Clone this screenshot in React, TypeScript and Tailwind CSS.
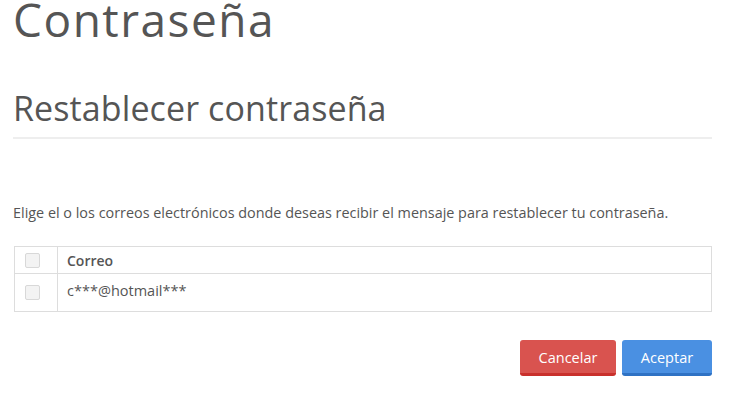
import React from 'react';

export default function App() {
  const rows = [{ id: 1, email: 'c***@hotmail***' }];

  return (
    <div className="w-[734px] h-[409px] bg-white overflow-hidden text-[#555555]" style={{ fontFamily: '"Open Sans", sans-serif' }}>
      <div className="ml-[13px] w-[699px]">
        <h1 className="text-[46px] leading-[38px] tracking-[1.5px] font-normal text-[#555555]">Contraseña</h1>

        <h2 className="mt-[50px] text-[34px] leading-[40px] tracking-[0.1px] font-normal text-[#555555]">Restablecer contraseña</h2>
        <div className="mt-[9px] h-[2px] bg-[#eeeeee]" />

        <p className="mt-[64px] text-[14.4px] leading-[20px]">
          Elige el o los correos electrónicos donde deseas recibir el mensaje para restablecer tu contraseña.
        </p>

        {/* tabla de correos */}
        <table className="mt-[23px] ml-[1px] w-[698px] border-collapse border border-[#dddddd] text-[14px]">
          <thead>
            <tr className="h-[27px]">
              <th className="w-[43px] border border-[#dddddd] p-0">
                <span className="block ml-[10px] w-[15px] h-[15px] border border-[#d8d8d8] bg-[#f3f3f3] rounded-[2px]" />
              </th>
              <th className="border border-[#dddddd] text-left font-semibold pl-[9px]">Correo</th>
            </tr>
          </thead>
          <tbody>
            {rows.map((r) => (
              <tr key={r.id} className="h-[38px]">
                <td className="border border-[#dddddd] p-0">
                  <span className="block ml-[10px] w-[15px] h-[15px] border border-[#d8d8d8] bg-[#f3f3f3] rounded-[2px]" />
                </td>
                <td className="border border-[#dddddd] pl-[9px] pb-[4px] text-[14.5px]">{r.email}</td>
              </tr>
            ))}
          </tbody>
        </table>

        <div className="mt-[28px] flex justify-end gap-[6px]">
          <button className="w-[96px] h-[36px] rounded-[3px] bg-[#d9534f] border-b-[3px] border-[#c9302c] text-white text-[14.5px] pt-[2px]">
            Cancelar
          </button>
          <button className="w-[90px] h-[36px] rounded-[3px] bg-[#4a90e2] border-b-[3px] border-[#2f72c4] text-white text-[14.5px] pt-[2px]">
            Aceptar
          </button>
        </div>
      </div>
    </div>
  );
}
